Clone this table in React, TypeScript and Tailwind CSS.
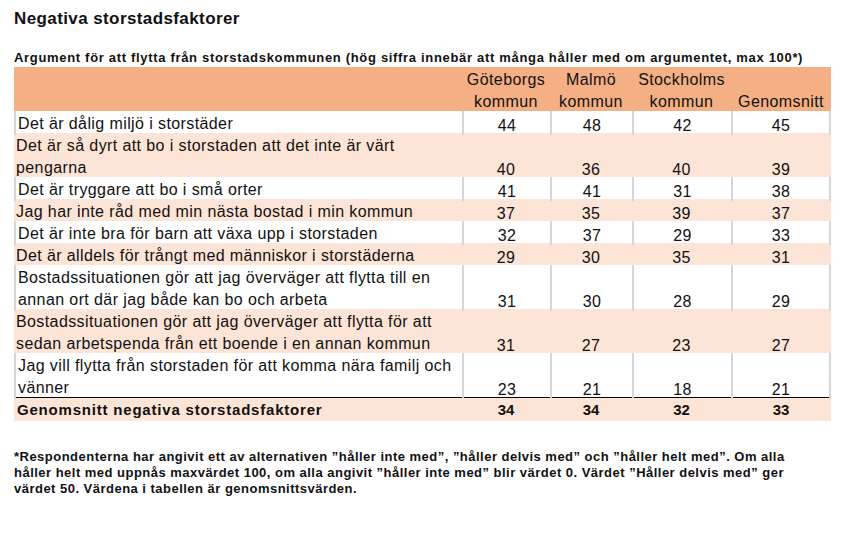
const rows = [
  { label: ["Det är dålig miljö i storstäder"], v: [44, 48, 42, 45], pink: false },
  { label: ["Det är så dyrt att bo i storstaden att det inte är värt", "pengarna"], v: [40, 36, 40, 39], pink: true },
  { label: ["Det är tryggare att bo i små orter"], v: [41, 41, 31, 38], pink: false },
  { label: ["Jag har inte råd med min nästa bostad i min kommun"], v: [37, 35, 39, 37], pink: true },
  { label: ["Det är inte bra för barn att växa upp i storstaden"], v: [32, 37, 29, 33], pink: false },
  { label: ["Det är alldels för trångt med människor i storstäderna"], v: [29, 30, 35, 31], pink: true },
  {
    label: ["Bostadssituationen gör att jag överväger att flytta till en", "annan ort där jag både kan bo och arbeta"],
    v: [31, 30, 28, 29],
    pink: false,
  },
  {
    label: ["Bostadssituationen gör att jag överväger att flytta för att", "sedan arbetspenda från ett boende i en annan kommun"],
    v: [31, 27, 23, 27],
    pink: true,
  },
  { label: ["Jag vill flytta från storstaden för att komma nära familj och", "vänner"], v: [23, 21, 18, 21], pink: false },
];

const cols = "grid grid-cols-[448px_88px_82px_99px_100px]";

const App: React.FC = () => {
  return (
    <div className="w-[862px] h-[535px] bg-white pl-[14px] pt-[9px] text-[#111] font-['Liberation_Sans',Arial,sans-serif]">
      <h1 className="text-[17px] leading-[20px] font-bold tracking-[0.4px]">Negativa storstadsfaktorer</h1>
      <p className="mt-[22px] text-[13px] leading-[14px] font-bold tracking-[0.68px] whitespace-nowrap">
        Argument för att flytta från storstadskommunen (hög siffra innebär att många håller med om argumentet, max 100*)
      </p>

      <div className="mt-[2px] w-[817px] text-[16px] leading-[22px] tracking-[0.4px]">
        <div className={`${cols} bg-[#f4b084] h-[44px]`}>
          <div />
          <div className="pt-[2px] text-center">Göteborgs<br />kommun</div>
          <div className="pt-[2px] text-center">Malmö<br />kommun</div>
          <div className="pt-[2px] text-center">Stockholms<br />kommun</div>
          <div className="pt-[24px] text-center">Genomsnitt</div>
        </div>

        {rows.map((row, i) => {
          const last = i === rows.length - 1;
          const h = row.label.length > 1 ? (last ? "h-[45px]" : "h-[44px]") : "h-[22px]";
          return (
            <div
              key={i}
              className={`${cols} ${h} ${row.pink ? "bg-[#fce4d6]" : "bg-white"} ${last ? "border-b-[1.5px] border-black" : ""}`}
            >
              <div className={`pl-[2px] pt-[2px] ${row.pink ? "" : "border-l-2 border-[#d6d6d6]"}`}>
                {row.label.map((l, j) => (
                  <div key={j} className="whitespace-nowrap">{l}</div>
                ))}
              </div>
              {row.v.map((n, j) => (
                <div
                  key={j}
                  className={`flex items-end justify-center leading-[18px] ${row.pink ? "" : "border-l-2 border-[#d6d6d6]"} ${
                    !row.pink && j === 3 ? "border-r-2" : ""
                  }`}
                >
                  {n}
                </div>
              ))}
            </div>
          );
        })}

        <div className={`${cols} bg-[#fce4d6] h-[23px] font-bold text-[15px] leading-[23px] tracking-normal`}>
          <div className="pl-[3px] tracking-[0.8px]">Genomsnitt negativa storstadsfaktorer</div>
          <div className="text-center">34</div>
          <div className="text-center">34</div>
          <div className="text-center">32</div>
          <div className="text-center">33</div>
        </div>
      </div>

      <p className="mt-[28px] text-[13px] leading-[16px] font-bold tracking-[0.48px] whitespace-nowrap">
        *Respondenterna har angivit ett av alternativen ”håller inte med”, ”håller delvis med” och ”håller helt med”. Om alla
        <br />
        håller helt med uppnås maxvärdet 100, om alla angivit ”håller inte med” blir värdet 0. Värdet ”Håller delvis med” ger
        <br />
        värdet 50. Värdena i tabellen är genomsnittsvärden.
      </p>
    </div>
  );
};

export default App;
